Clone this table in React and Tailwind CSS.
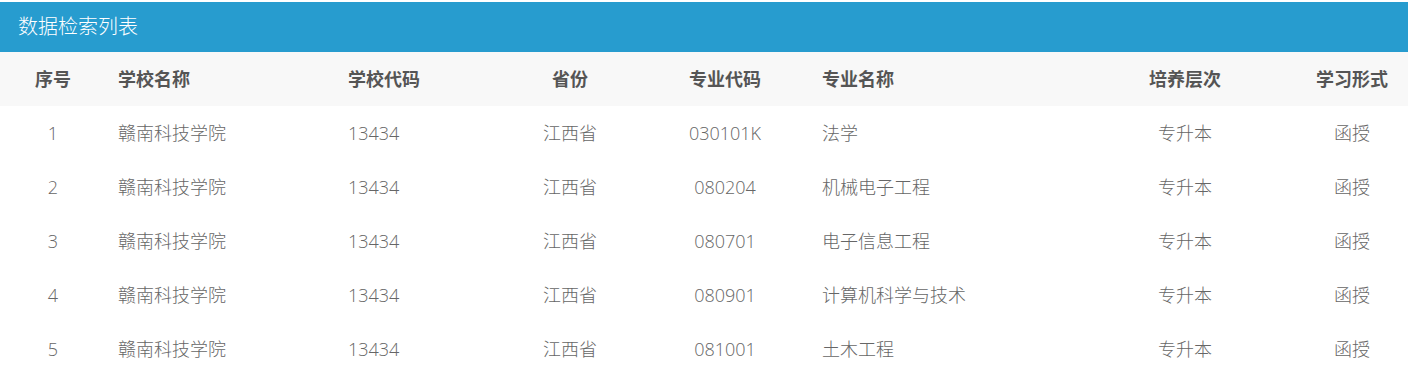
import React from "react";

const rows = [
  ["1", "赣南科技学院", "13434", "江西省", "030101K", "法学", "专升本", "函授"],
  ["2", "赣南科技学院", "13434", "江西省", "080204", "机械电子工程", "专升本", "函授"],
  ["3", "赣南科技学院", "13434", "江西省", "080701", "电子信息工程", "专升本", "函授"],
  ["4", "赣南科技学院", "13434", "江西省", "080901", "计算机科学与技术", "专升本", "函授"],
  ["5", "赣南科技学院", "13434", "江西省", "081001", "土木工程", "专升本", "函授"],
];

const heads = ["序号", "学校名称", "学校代码", "省份", "专业代码", "专业名称", "培养层次", "学习形式"];

const cellCls = [
  "text-center",
  "text-left pl-[12px]",
  "text-left pl-[12px]",
  "text-center",
  "text-center",
  "text-left pl-[22px]",
  "text-center",
  "text-center",
];

const grid = "grid grid-cols-[106px_230px_154px_160px_150px_274px_222px_112px]";

export default function App() {
  return (
    <div
      className="w-[1408px] bg-white pt-[2px]"
      style={{ fontFamily: '"Open Sans", "Noto Sans CJK SC", sans-serif' }}
    >
      <div className="h-[50px] bg-[#279ccf] flex items-center pl-[18px]">
        <span className="text-white text-[20px] font-light leading-none">数据检索列表</span>
      </div>
      <div className={`${grid} h-[54px] items-center bg-[#f8f8f8]`}>
        {heads.map((h, i) => (
          <div key={i} className={`${cellCls[i]} text-[18px] font-bold text-[#555555]`}>
            {h}
          </div>
        ))}
      </div>
      {rows.map((r, ri) => (
        <div key={ri} className={`${grid} h-[54px] items-center`}>
          {r.map((c, i) => (
            <div key={i} className={`${cellCls[i]} text-[18px] font-light text-[#666666]`}>
              {c}
            </div>
          ))}
        </div>
      ))}
    </div>
  );
}
